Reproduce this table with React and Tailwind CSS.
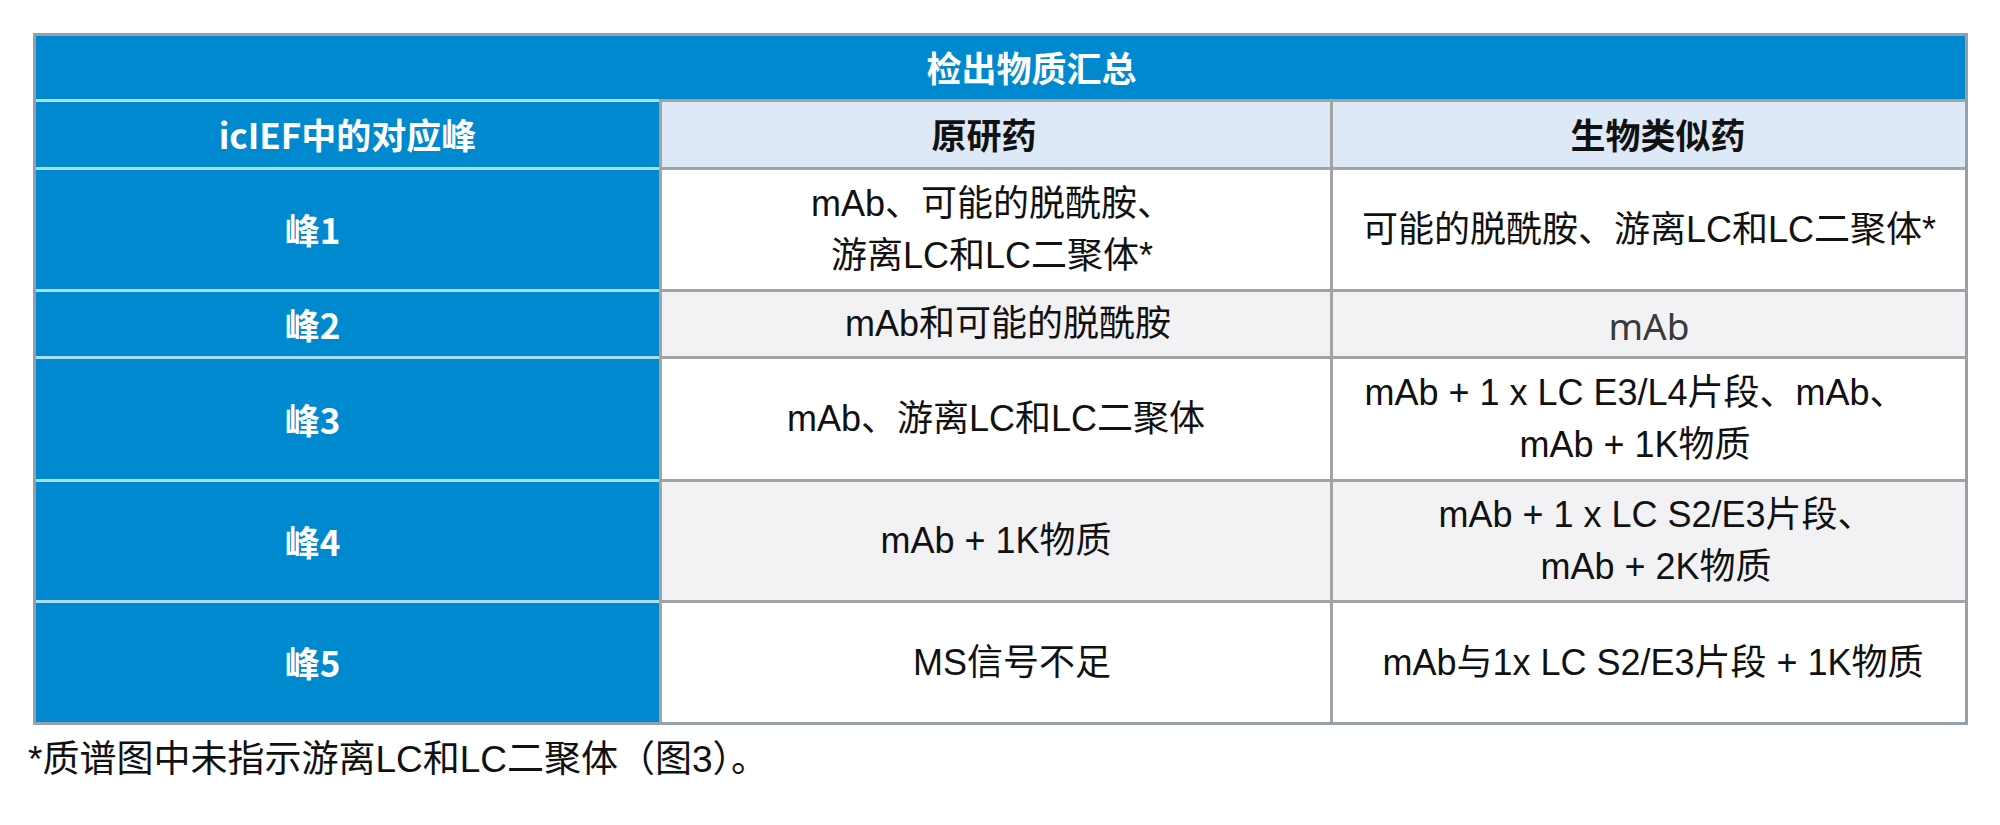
import React from "react";

const rows = [
  { h: "h-[122px]", label: "峰1", bg: "bg-white", p2: "pr-[8px]", p3: "", c2: ["mAb、可能的脱酰胺、", "游离LC和LC二聚体*"], c3: ["可能的脱酰胺、游离LC和LC二聚体*"] },
  { h: "h-[67px]", label: "峰2", bg: "bg-[#f2f2f5]", p2: "pl-[24px]", p3: "", c2: ["mAb和可能的脱酰胺"], c3: null },
  { h: "h-[123px]", label: "峰3", bg: "bg-white", p2: "", p3: "pr-[28px]", c2: ["mAb、游离LC和LC二聚体"], c3: ["mAb + 1 x LC E3/L4片段、mAb、", "mAb + 1K物质"] },
  { h: "h-[121px]", label: "峰4", bg: "bg-[#f2f2f5]", p2: "", p3: "pl-[14px]", c2: ["mAb + 1K物质"], c3: ["mAb + 1 x LC S2/E3片段、", "mAb + 2K物质"] },
  { h: "h-[122px]", label: "峰5", bg: "bg-white", p2: "pl-[32px]", p3: "pl-[8px]", c2: ["MS信号不足"], c3: ["mAb与1x LC S2/E3片段 + 1K物质"] },
];

function Lines({ lines }) {
  return (
    <div className="text-center text-[36px] leading-[52px] text-[#111] font-['Liberation_Sans','Noto_Sans_CJK_SC',sans-serif]">
      {lines.map((l, i) => (
        <div key={i}>{l}</div>
      ))}
    </div>
  );
}

export default function App() {
  return (
    <div className="w-[2000px] h-[825px] bg-white pt-[33px] pl-[28px]">
      <div className="ml-[5px] w-[1935px] border-[3px] border-[#97a0a8]">
        <div className="h-[63px] bg-[#0089cf] flex items-center justify-center pl-[62px] text-[35px] font-bold text-white font-['Noto_Sans_CJK_SC','Noto_Sans',sans-serif]">
          检出物质汇总
        </div>
        <div className="flex h-[68px] text-[35px] font-bold font-['Noto_Sans_CJK_SC','Noto_Sans',sans-serif]">
          <div className="w-[623px] shrink-0 bg-[#0089cf] border-t-[3px] border-[#a6e1f5] flex items-center justify-center text-white">
            icIEF中的对应峰
          </div>
          <div className="w-[671px] shrink-0 bg-[#dee9f7] border-t-[3px] border-l-[3px] border-[#a3a3a3] flex items-center justify-center pr-[24px] text-[#111]">
            原研药
          </div>
          <div className="flex-1 bg-[#dee9f7] border-t-[3px] border-l-[3px] border-[#a3a3a3] flex items-center justify-center pl-[18px] text-[#111]">
            生物类似药
          </div>
        </div>
        {rows.map((r, i) => (
          <div key={i} className={`flex ${r.h}`}>
            <div className="w-[623px] shrink-0 bg-[#0089cf] border-t-[3px] border-[#a6e1f5] flex items-center justify-center pr-[70px] text-[35px] font-bold text-white font-['Noto_Sans_CJK_SC','Noto_Sans',sans-serif]">
              {r.label}
            </div>
            <div className={`w-[671px] shrink-0 ${r.bg} ${r.p2} border-t-[3px] border-l-[3px] border-[#a3a3a3] flex items-center justify-center`}>
              <Lines lines={r.c2} />
            </div>
            <div className={`flex-1 ${r.bg} ${r.p3} border-t-[3px] border-l-[3px] border-[#a3a3a3] flex items-center justify-center`}>
              {r.c3 ? (
                <Lines lines={r.c3} />
              ) : (
                <div className="text-[37px] leading-[52px] text-[#3a3a3a] pt-[4px] font-['Noto_Sans','Open_Sans',sans-serif]">
                  mAb
                </div>
              )}
            </div>
          </div>
        ))}
      </div>
      <div className="mt-[12px] text-[37px] leading-[45px] text-[#111] font-['Liberation_Sans','Noto_Sans_CJK_SC',sans-serif]">
        *质谱图中未指示游离LC和LC二聚体（图3）。
      </div>
    </div>
  );
}
